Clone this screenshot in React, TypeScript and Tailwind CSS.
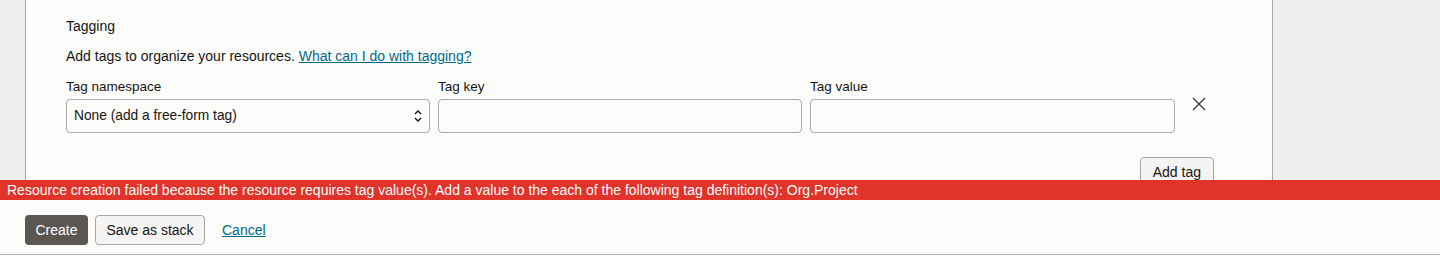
import React from "react";

const FONT = { fontFamily: '"Liberation Sans", Arial, sans-serif' };

export default function App() {
  return (
    <div
      className="flex h-[256px] w-[1440px] flex-col overflow-hidden bg-[#f1efed] text-[#161513]"
      style={FONT}
    >
      {/* Form area */}
      <div className="flex h-[180px] shrink-0">
        <div className="w-[25px] shrink-0 bg-[#f1efed]" />
        <div className="w-[1248px] shrink-0 border-x border-[#a9a6a2] bg-[#fcfcfb] pl-[40px] pr-[58px] pt-[16px]">
          <div className="text-[14px] leading-[20px]">Tagging</div>
          <p className="mt-[10px] text-[14px] leading-[20px]">
            Add tags to organize your resources.{" "}
            <a href="#" className="text-[#00688c] underline">
              What can I do with tagging?
            </a>
          </p>
          <div className="mt-[11px] flex items-start gap-[8px]">
            <div className="w-[364px]">
              <div className="text-[13.5px] leading-[20px]">Tag namespace</div>
              <div className="mt-[2px] flex h-[34px] items-center justify-between rounded-[4px] border border-[#b0aba6] bg-[#fcfcfb] pl-[7px] pr-[6px] text-[13.75px]">
                <span>None (add a free-form tag)</span>
                <svg width="10" height="16" viewBox="0 0 10 16" fill="none" stroke="#161513" strokeWidth="1.4">
                  <path d="M2 6l3-3 3 3" />
                  <path d="M2 10l3 3 3-3" />
                </svg>
              </div>
            </div>
            <div className="w-[364px]">
              <div className="text-[13.5px] leading-[20px]">Tag key</div>
              <div className="mt-[2px] h-[34px] rounded-[4px] border border-[#b0aba6] bg-[#fcfcfb]" />
            </div>
            <div className="w-[365px]">
              <div className="text-[13.5px] leading-[20px]">Tag value</div>
              <div className="mt-[2px] h-[34px] rounded-[4px] border border-[#b0aba6] bg-[#fcfcfb]" />
            </div>
            <div className="ml-[9px] pt-[20px]">
              <svg width="14" height="14" viewBox="0 0 14 14" stroke="#3a3734" strokeWidth="1.3">
                <path d="M1 1l12 12M13 1L1 13" />
              </svg>
            </div>
          </div>
          <div className="mt-[24px] flex justify-end">
            <button className="h-[30px] rounded-[4px] border border-[#aaa6a1] bg-[#f5f4f2] px-[12px] text-[14px]">
              Add tag
            </button>
          </div>
        </div>
        <div className="flex-1 bg-[#f1efed]" />
      </div>

      {/* Error bar */}
      <div className="flex h-[20px] shrink-0 items-center bg-[#e0332a] pl-[7px] text-[14px] text-white">
        Resource creation failed because the resource requires tag value(s). Add a value to the each of the following tag definition(s): Org.Project
      </div>

      {/* Footer */}
      <div className="flex h-[55px] shrink-0 items-start gap-[7px] border-b border-[#b4b0ab] bg-[#fcfcfb] pl-[25px] pt-[15px]">
        <button className="h-[30px] w-[63px] rounded-[4px] bg-[#5b5652] text-[14px] text-white">
          Create
        </button>
        <button className="h-[30px] w-[110px] rounded-[4px] border border-[#aaa6a1] bg-[#f5f4f2] text-[14px]">
          Save as stack
        </button>
        <a href="#" className="ml-[10px] text-[14px] leading-[30px] text-[#00688c] underline">
          Cancel
        </a>
      </div>
      <div className="flex-1 bg-[#fcfcfb]" />
    </div>
  );
}
